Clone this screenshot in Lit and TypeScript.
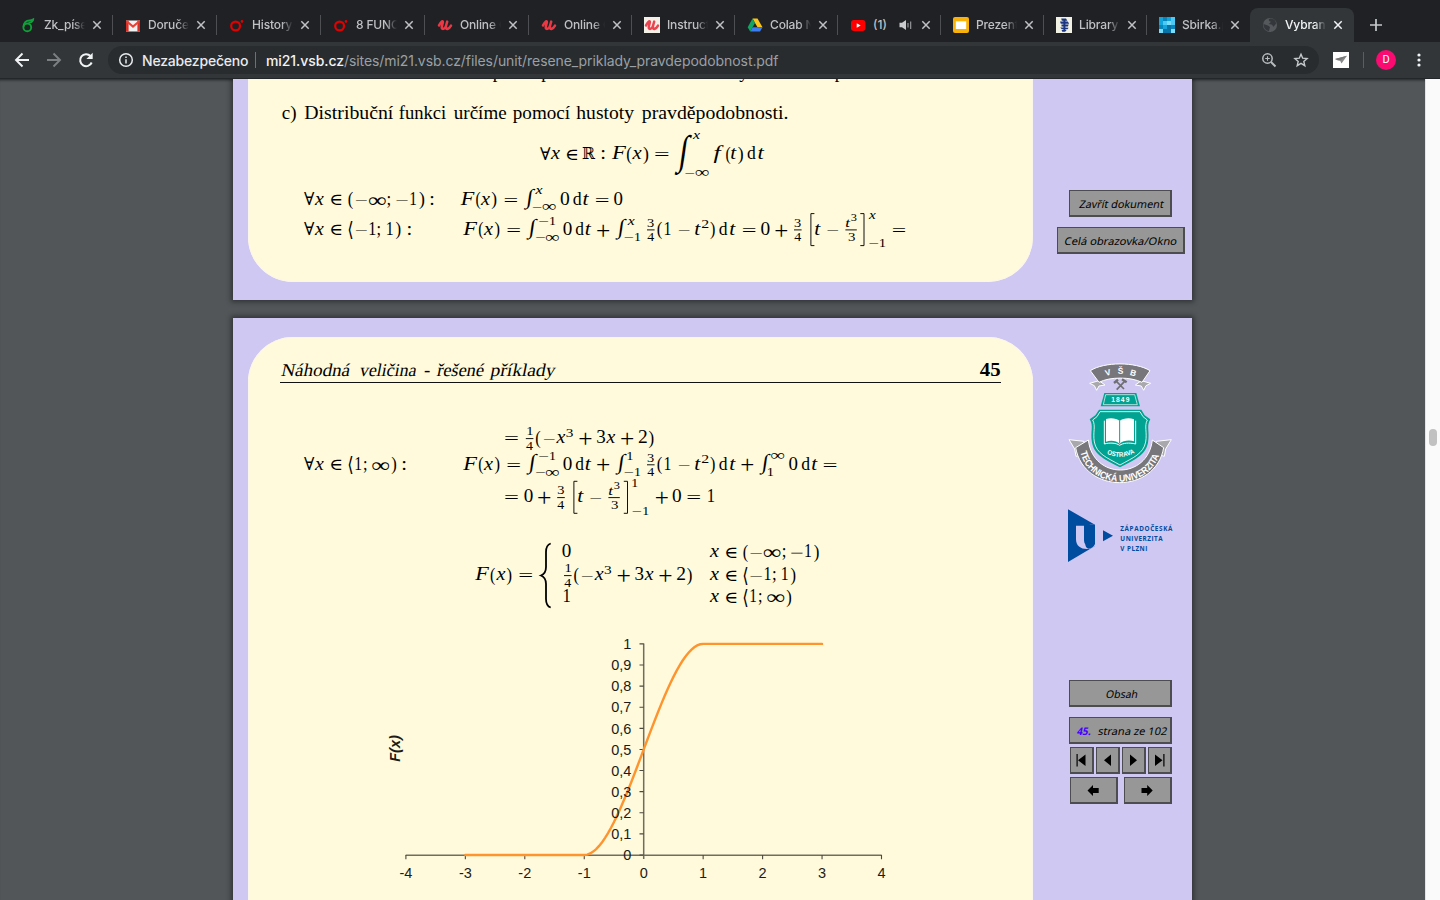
import { LitElement, html, svg, css } from "lit";
import { customElement, property } from "lit/decorators.js";

const SERIF = '"Liberation Serif", "DejaVu Serif", "DejaVu Sans", serif';
const SANS = '"Noto Sans", "Open Sans", sans-serif';

/* ---------- glyph fitting ---------- */

const ctx = document.createElement("canvas").getContext("2d")!;
interface Ink { l: number; r: number; t: number; b: number; }
function ink(text: string, font: string): Ink {
  ctx.font = font;
  const m = ctx.measureText(text);
  return { l: -m.actualBoundingBoxLeft / 100, r: m.actualBoundingBoxRight / 100, t: m.actualBoundingBoxAscent / 100, b: m.actualBoundingBoxDescent / 100 };
}
interface Opt { italic?: boolean; bold?: boolean; skew?: boolean; family?: string; cls?: string; }

// Sets text on a baseline so that its ink spans x1..x2.
function run(text: string, x1: number, x2: number, bl: number, size = 18, o: Opt = {}) {
  const k = ink(text, `${o.italic ? "italic " : ""}${o.bold ? "bold " : ""}100px ${o.family ?? SERIF}`);
  const sl = o.skew ? 0.2 : 0;
  const lean = sl * size * 0.68;
  const sx = (x2 - x1 - lean) / ((k.r - k.l) * size);
  const cls = `${o.family ? "sans" : "serif"} ${o.italic ? "it" : ""} ${o.bold ? "bd" : ""} ${o.cls ?? ""}`;
  return svg`<text class=${cls} font-size=${size} transform="matrix(${sx} 0 ${-sl} 1 ${x1 - k.l * size * sx} ${bl})">${text}</text>`;
}
// Stretches a symbol to a box; integrals lean to the right.
function box(text: string, x1: number, x2: number, y1: number, y2: number) {
  const k = ink(text, `100px ${SERIF}`);
  const sl = text === "∫" ? 0.14 : 0;
  const h = y2 - y1;
  const sx = (x2 - x1 - sl * h * 0.75) / ((k.r - k.l) * 18);
  const sy = h / ((k.t + k.b) * 18);
  const below = k.b * 18 * sy;
  return svg`<text class="serif" font-size="18" transform="matrix(${sx} 0 ${-sl * sy} ${sy} ${x1 - k.l * 18 * sx + sl * below * 0.6} ${y1 + k.t * 18 * sy})">${text}</text>`;
}

const SPAN: Record<string, [number, number]> = {
  "(": [-13.6, 4.6], ")": [-13.6, 4.6], "⟨": [-13.6, 4.6], "∀": [-12.7, 0.2], "∈": [-10, 0.6],
  "∞": [-7.9, 0.2], "−": [-5, -4.1], "=": [-6.9, -2.5], "+": [-10.4, 1.4], "ℝ": [-12.3, 0], "∫": [-15.7, 5.4],
};
type Tok = [string, number, number];
const math = (bl: number, toks: Tok[]) => toks.map(([c, a, b]) =>
  SPAN[c] ? box(c, a, b, bl + SPAN[c][0], bl + SPAN[c][1]) : run(c, a, b, bl, 18, { italic: /[xtFf]/.test(c) }));
const small = (c: string, a: number, b: number, bl: number) =>
  c === "−" ? box(c, a, b, bl - 4.4, bl - 3.5)
  : c === "∞" ? box(c, a, b, bl - 6.3, bl - 0.4)
  : run(c, a, b, bl, 13, { italic: /[xt]/.test(c) });
const frac = (x: number, bl: number, n: string, d: string) => svg`
  ${run(n, n === "1" ? x + 1.6 : x + 0.6, x + 6.8, bl - 7.9, 12.6)}${run(d, x + 0.3, x + 7, bl + 6.2, 12.6)}
  <path class="rule" d="M${x} ${bl - 4.7}h7.6"/>`;
const bracket = (bl: number, l: number, r: number) => svg`
  ${math(bl, [["t", l + 5, l + 10.6], ["−", l + 17, l + 28]])}
  ${run("t", l + 36, l + 40.4, bl - 7.7, 12.8, { italic: true })}${run("3", l + 41.3, l + 46.6, bl - 13.6, 9.8)}
  <path class="rule" d="M${l + 35.4} ${bl - 4.7}h11.4"/>${run("3", l + 38.6, l + 45, bl + 6.2, 12.6)}
  <path class="rule" d="M${l + 4.4} ${bl - 21}h-3.5v32h3.5M${r - 4.2} ${bl - 21}h3.7v32h-3.7"/>`;

const strip = (y: number, h: number, body: unknown) =>
  html`<svg class="strip" width="785" height=${h} viewBox="248 ${y} 785 ${h}">${body}</svg>`;
const label = (text: string, w: number, a: number, b: number, bl: number) =>
  html`<svg width=${w} height="23" viewBox="0 0 ${w} 23">${run(text, a, b, bl, 10.6, { family: SANS, skew: true })}</svg>`;

const lead = (bl: number) => math(bl, [["∀", 304, 314.3], ["x", 314.6, 323.7], ["∈", 330.8, 341]]);
const lowInf = (bl: number) => svg`${math(bl, [["F", 463, 477.2], ["(", 478.8, 483], ["x", 483.7, 493], [")", 495, 499.3], ["=", 507.4, 520], ["∫", 526.5, 537.7], ["0", 563.2, 571.6], ["d", 575.8, 583.8], ["t", 585.5, 591.1], ["+", 597, 609.2], ["∫", 615.5, 626.6]])}
  ${small("−", 538.8, 548, bl - 9.8)}${small("1", 550, 555, bl - 9.8)}${small("−", 535.8, 544.8, bl + 6.8)}${small("∞", 545.8, 559, bl + 6.8)}
  ${small("−", 624.3, 633, bl + 6.8)}${small("1", 635, 640, bl + 6.8)}`;
const square = (bl: number) => svg`${frac(647, bl, "3", "4")}${math(bl, [["(", 657.3, 661.8], ["1", 664.8, 670.5], ["−", 678.3, 689.2], ["t", 695, 700.6], [")", 710.4, 714.6], ["d", 719.4, 727.5], ["t", 730, 735.6]])}${small("2", 701.8, 708.3, bl - 6.8)}`;
const cubic = (bl: number, x: number) => svg`${frac(x, bl, "1", "4")}${math(bl, [["(", x + 10.2, x + 14.6], ["−", x + 17.5, x + 28.5], ["x", x + 30.3, x + 39.5], ["+", x + 53.4, x + 65.6], ["3", x + 71.3, x + 79.5], ["x", x + 80.4, x + 89.5], ["+", x + 95.3, x + 107.5], ["2", x + 113, x + 121], [")", x + 123.2, x + 127.6]])}${small("3", x + 40.6, x + 47.2, bl - 6.4)}`;

/* ---------- browser chrome ---------- */

const udemy = (c: string) => svg`<path d="M2 8.500C3.500 6 4.300 4.200 5.300 4.200c1.800 0-1.100 5-.5 6.800.7 2 3.200.6 4.200-2.200L10.200 4.600M9 8.800c-.4 2.600.5 3.500 1.800 3 1.400-.5 2.400-1.800 3.200-3.200" fill="none" stroke=${c} stroke-width="2.500" stroke-linecap="round"/>`;
const ring = svg`<circle cx="6.600" cy="9" r="4.400" fill="none" stroke="#e30000" stroke-width="2.200"/><circle cx="13" cy="4.400" r="1.300" fill="#e30000"/>`;
const icons: Record<string, unknown> = {
  six: svg`<circle cx="6.300" cy="10.400" r="3.900" fill="none" stroke="#0fa13a" stroke-width="1.900"/><path d="M2.500 10C2.400 6 5 3.400 8.500 3.400c1.800 0 2.800-.6 3.800-1.200C12.300 5 9.500 5.800 7.500 5.400" fill="none" stroke="#0fa13a" stroke-width="1.700"/>`,
  gmail: svg`<path d="M1 3.500h14v11H1z" fill="#f2f2f2"/><path d="M1 3.500h2.600v11H1zM12.400 3.500H15v11h-2.600z" fill="#d93025"/><path d="M1.700 4.300 8 9.600l6.300-5.300" fill="none" stroke="#ea4335" stroke-width="2.100"/>`,
  ring,
  udemy: udemy("#ec3845"),
  udemyBox: svg`<path d="M0 0h16v16H0z" fill="#f3f1e7"/>${udemy("#ec4350")}`,
  drive: svg`<path d="M5.500 1.500h5l5 8.700h-5z" fill="#fbc51c"/><path d="M5.500 1.500.7 10.200l2.500 4.200L8 6z" fill="#11a561"/><path d="M5.600 10.200h9.900L13 14.500H3.200z" fill="#3d7df2"/>`,
  youtube: svg`<rect x="1" y="3" width="14.500" height="11" rx="3" fill="#f00"/><path d="m6.700 6.200 4 2.300-4 2.300z" fill="#fff"/>`,
  slides: svg`<rect x="0" y="0" width="16" height="16" rx="2" fill="#f9b20a"/><path d="M2.800 4.300h10.400v7.700H2.800z" fill="#fff"/>`,
  library: svg`<path d="M0 0h16v16H0z" fill="#f1f1e4"/><path d="M5.200 1.600h4.800l1.400 2.100H5.800zM4 4.500h7.800l1.400 2.200H4.800zM5.500 7.600h7.200l-.8 2H5.500zM4.200 10.500l8.400.2-1 1.500H5.800zM5.600 13l5 .1-1.500 1.700H6.300z" fill="#1c3580"/><path d="M8.400 2v12" stroke="#1c3580" stroke-width="2"/>`,
  squares: svg`<path d="M0 0h16v16H0z" fill="#14a4dc"/><path d="M4 0h4v4H4zM0 8h4v4H0zM12 8h4v4h-4z" fill="#0886bb"/><path d="M12 0h4v8h-4zM4 4h4v4H4z" fill="#4cc9f5"/><path d="M8 4h4v4H8zM0 12h4v4H0zM12 12h4v4h-4z" fill="#7adcf8"/><path d="M4 12h8v4H4zM8 8h4v4H8z" fill="#0873a6"/>`,
  globe: svg`<circle cx="8" cy="8" r="7" fill="#56595c"/><path d="M8.500 1.500C6 2 6.500 4 8 4.300 9.500 5 8 6.600 6.500 7l3 .5c1.500.5 1 2 2 2.200l2.500-3c0-3-2-5-5.500-5.200zM1.500 7l4.500 1.500 2 1.500-1 4C4 14 1.500 11 1.500 7z" fill="#34373b"/>`,
};

@customElement("browser-tab")
class BrowserTab extends LitElement {
  @property() icon = "";
  @property() name = "";
  @property({ type: Boolean }) audio = false;
  @property({ type: Boolean, reflect: true }) active = false;
  static styles = css`
    :host { display: flex; align-items: center; box-sizing: border-box; height: 34px; padding-left: 12px; color: #bfc1c5; font: 500 12px Inter, sans-serif; flex: 0 0 103px; position: relative; }
    :host(.wide) { flex-basis: 104px; }
    .fav { width: 16px; height: 16px; flex: none; }
    .title { width: 41px; margin-left: 7px; overflow: hidden; white-space: nowrap; letter-spacing: -0.15px; line-height: 16px; -webkit-mask: linear-gradient(90deg, #000 72%, transparent); }
    .title.short { width: 17px; -webkit-mask: none; overflow: visible; letter-spacing: 0; }
    .sound { width: 16px; height: 16px; margin: 0 0 0 8px; }
    .close { width: 10px; height: 10px; margin-left: 7px; }
    :host::after { content: ""; width: 1px; height: 20px; background: #4d4f53; margin-left: auto; }
    :host([active]) { background: #323639; border-radius: 8px 8px 0 0; color: #f1f3f4; flex-basis: 104px; }
    :host([active])::after, :host(.last)::after { background: none; }
  `;
  render() {
    return html`<svg class="fav" viewBox="0 0 16 16">${icons[this.icon]}</svg>
      <span class="title ${this.audio ? "short" : ""}">${this.name}</span>
      ${this.audio ? html`<svg class="sound" viewBox="0 0 16 16"><path d="M1.500 5.700H4L8 3v10l-4-2.700H1.500z" fill="#c9cbce"/><path d="M10 6v4.500M12.700 4.500v7.500" stroke="#9fa1a4" stroke-width="1.100"/></svg>` : ""}
      <svg class="close" viewBox="0 0 10 10"><path d="m1.300 1.300 7.400 7.400m0-7.400L1.300 8.700" stroke="currentColor" stroke-width="1.500"/></svg>`;
  }
}

const TABS: [string, string][] = [
  ["six", "Zk_písemka"], ["gmail", "Doručená"], ["ring", "History of"], ["ring", "8 FUNCTIO"], ["udemy", "Online C"], ["udemy", "Online C"],
  ["udemyBox", "Instructor"], ["drive", "Colab No"], ["youtube", "(1)"], ["slides", "Prezenta"], ["library", "Library G"], ["squares", "Sbirka.pdf"],
];

@customElement("chrome-bars")
class ChromeBars extends LitElement {
  static styles = css`
    :host { display: block; font-family: Inter, sans-serif; }
    .tabs { display: flex; height: 42px; box-sizing: border-box; padding: 8px 0 0 9px; background: #202124; }
    .plus { width: 14px; height: 14px; margin: 10px 0 0 15px; }
    .bar { display: flex; align-items: center; height: 37px; box-sizing: border-box; background: #323639; border-bottom: 1px solid #24272a; padding-left: 13px; }
    .nav { width: 18px; height: 18px; margin-right: 14px; }
    .omni { display: flex; align-items: center; width: 1211px; height: 28px; margin-left: -1px; box-sizing: border-box; border-radius: 14px; background: #282c2f; padding: 0 10px; font-size: 14px; color: #9aa0a6; }
    .info { width: 16px; height: 16px; }
    .insecure { color: #e8eaed; font-weight: 500; margin-left: 8px; width: 107px; white-space: nowrap; letter-spacing: -0.2px; }
    .sep { width: 1px; height: 16px; background: #6d7175; margin: 0 10px 0 6px; }
    .url { white-space: nowrap; flex: 1; letter-spacing: -0.075px; }
    .host { color: #f1f3f4; font-weight: 500; }
    .zoom { width: 16px; height: 16px; margin-right: 16px; }
    .ext { width: 16px; height: 16px; margin-left: 14px; }
    .vsep { width: 1px; height: 16px; background: #5a5e61; margin-left: 14px; }
    .avatar { width: 20px; height: 20px; border-radius: 50%; background: #fb0a72; color: #fff; font: 11px/20px Roboto, sans-serif; text-align: center; margin-left: 12px; }
    .menu { width: 4px; height: 16px; margin-left: 21px; }
  `;
  render() {
    return html`<div class="tabs">
        ${TABS.map(([i, n], k) => html`<browser-tab class="${k < 5 ? "wide" : ""} ${k === 11 ? "last" : ""}" .icon=${i} .name=${n} ?audio=${i === "youtube"}></browser-tab>`)}
        <browser-tab active icon="globe" name="Vybrané"></browser-tab>
        <svg class="plus" viewBox="0 0 14 14"><path d="M7 1v12M1 7h12" stroke="#c6c8ca" stroke-width="1.700"/></svg>
      </div>
      <div class="bar">
        <svg class="nav" viewBox="0 0 18 18"><path d="M16 9H3m6.500-6.500L3 9l6.500 6.500" fill="none" stroke="#f1f3f4" stroke-width="1.900"/></svg>
        <svg class="nav" viewBox="0 0 18 18"><path d="M2 9h13M8.500 2.500 15 9l-6.500 6.500" fill="none" stroke="#7d8083" stroke-width="1.900"/></svg>
        <svg class="nav" viewBox="0 0 18 18"><path d="M14.700 11.500A6 6 0 1 1 13.500 5" fill="none" stroke="#f1f3f4" stroke-width="2"/><path d="M15.700 1.700v6.300H9.400z" fill="#f1f3f4"/></svg>
        <div class="omni">
          <svg class="info" viewBox="0 0 16 16"><circle cx="8" cy="8" r="6.300" fill="none" stroke="#e8eaed" stroke-width="1.500"/><path d="M8 7.200v4.300M8 4.400V6" stroke="#e8eaed" stroke-width="1.500"/></svg>
          <span class="insecure">Nezabezpečeno</span><span class="sep"></span>
          <span class="url"><span class="host">mi21.vsb.cz</span>/sites/mi21.vsb.cz/files/unit/resene_priklady_pravdepodobnost.pdf</span>
          <svg class="zoom" viewBox="0 0 16 16"><circle cx="6.500" cy="6.500" r="4.700" fill="none" stroke="#b9bcbf" stroke-width="1.500"/><path d="m10 10 4.500 4.500" stroke="#b9bcbf" stroke-width="1.900"/><path d="M6.500 4.200v4.600M4.200 6.500h4.600" stroke="#b9bcbf" stroke-width="1.100"/></svg>
          <svg class="info" viewBox="0 0 16 16"><path d="m8 2.200 1.700 4 4.400.4-3.300 2.900 1 4.200L8 11.400l-3.800 2.300 1-4.200-3.300-2.900 4.400-.4z" fill="none" stroke="#c6c9cc" stroke-width="1.400"/></svg>
        </div>
        <svg class="ext" viewBox="0 0 16 16"><path d="M0 0h16v16H0z" fill="#fff"/><path d="M2 7 14 3.700 8.500 11.500l-1.500-3z" fill="#8a8a8a"/><path d="M7 8.500l7-4.800L2 7l3 1.500z" fill="#777"/></svg>
        <span class="vsep"></span><span class="avatar">D</span>
        <svg class="menu" viewBox="0 0 4 16"><circle cx="2" cy="3" r="1.600" fill="#f1f3f4"/><circle cx="2" cy="8" r="1.600" fill="#f1f3f4"/><circle cx="2" cy="13" r="1.600" fill="#f1f3f4"/></svg>
      </div>`;
  }
}

/* ---------- document ---------- */

const X = (v: number) => 643.7 + v * 59.45;
const Y = (v: number) => 855 - v * 211.1;
const curve = Array.from({ length: 41 }, (_, i) => {
  const x = -1 + i / 20;
  return `L${X(x).toFixed(2)} ${Y((-(x ** 3) + 3 * x + 2) / 4).toFixed(2)}`;
}).join("");

const chart = () => svg`
  <path class="axis" d="M405.700 855.300H881.700M643.700 643.500V859"/>
  <path class="tick" d="${[-4, -3, -2, -1, 1, 2, 3, 4].map((v) => `M${X(v)} 855v4.200`).join("")}${Array.from({ length: 11 }, (_, i) => `M639.500 ${Y(i / 10)}h4.200`).join("")}"/>
  <path class="curve" d="M${X(-3)} ${Y(0)}${curve}L${X(3)} ${Y(1)}"/>
  ${Array.from({ length: 11 }, (_, i) => svg`<text class="num" x="631.300" y=${Y(i / 10) + 5.2} text-anchor="end">${i === 0 ? "0" : i === 10 ? "1" : `0,${i}`}</text>`)}
  ${[-4, -3, -2, -1, 0, 1, 2, 3, 4].map((v) => svg`<text class="num" x=${X(v)} y="878" text-anchor="middle">${v}</text>`)}
  <text class="num ylab" transform="translate(400 748.500) rotate(-90)" text-anchor="middle">F(x)</text>`;

const emblem = () => svg`
  <g stroke="#fff" stroke-width="3" stroke-linejoin="round">
    <path d="M122 85l28-8 18 13-18 3-7 13-7-14zM305 85l-28-8-18 13 18 3 7 13 7-14z" fill="#a9a9ad"/>
    <path d="M124 47C165 20 260 20 303 47L279 82C245 65 182 65 150 82z" fill="#77777b"/>
    <path d="M60 254l45 5-2 38-22 7-4-22zM367 254l-45 5 2 38 22 7 4-22z" fill="#a9a9ad"/>
    <path d="M80 278L118 255C132 375 296 375 310 255L344 278C320 418 105 418 80 278z" fill="#77777b"/>
  </g>
  <g stroke="#6f6f73" stroke-width="5"><path d="M200 77l25 25M229 77l-26 27"/><path d="M195 84l12-10M219 73l14 9" stroke-width="7"/></g>
  <path d="M166 114h96l11 40H155z" fill="#00a391"/><path d="M170 119h87l8 30H163z" fill="none" stroke="#fff" stroke-width="2"/>
  <path d="M150 164h127l10 17 17 12c-13 20-1 37-7 70-8 39-42 51-84 74-42-23-76-35-84-74-6-33 6-50-7-70l17-12z" fill="#00a391"/>
  <path d="M153 170h120l9 15 13 10c-10 18 0 36-5 66-7 36-38 47-77 69-39-22-70-33-77-69-5-30 5-48-5-66l13-10z" fill="none" stroke="#fff" stroke-width="2.500"/>
  <path d="M171 192c15-5 32-2 41 6 9-8 29-11 43-5v66c-14-5-34-2-43 7-9-9-27-12-41-6z" fill="#fff"/>
  <path d="M212 198v66" stroke="#00a391" stroke-width="3"/><path d="M166 197v70c18-5 36-3 46 4 10-7 28-9 48-4v-70" fill="none" stroke="#fff" stroke-width="3"/>
  <path id="top" d="M158 69Q213 43 270 69" fill="none"/><path id="low" d="M92 283C114 412 312 412 335 283" fill="none"/><path id="mid" d="M168 293Q213 319 262 291" fill="none"/>
  <text class="seal" font-size="25"><textPath href="#top" textLength="90" startOffset="14">V Š B</textPath></text>
  <text class="seal" font-size="29" textLength="312" lengthAdjust="spacingAndGlyphs"><textPath href="#low" startOffset="8" textLength="312" lengthAdjust="spacingAndGlyphs">TECHNICKÁ UNIVERZITA</textPath></text>
  <text class="seal" font-size="20" textLength="88" lengthAdjust="spacingAndGlyphs"><textPath href="#mid" startOffset="6" textLength="88" lengthAdjust="spacingAndGlyphs">OSTRAVA</textPath></text>
  <text class="seal" font-size="20" x="187" y="141" textLength="54">1849</text>
  <path d="M57 463L138 509V573L57 621zM162 526l30 16-30 17z" fill="#004c9f"/>
  <path d="M81 512h24v44c0 14 10 18 17 10V509h16v64q-8 9-19 9c-22 2-38-8-38-29z" fill="#cfc8f3"/>
  <path d="M109 509h29v58q-6 14-20 14-9-3-9-15z" fill="#004c9f"/>
  <text class="zcu" x="214" y="527" textLength="156">ZÁPADOČESKÁ</text><text class="zcu" x="214" y="558" textLength="127">UNIVERZITA</text><text class="zcu" x="214" y="589" textLength="81">V PLZNI</text>`;

@customElement("pdf-view")
class PdfView extends LitElement {
  static styles = css`
    :host { display: flex; height: 821px; overflow: hidden; background: #525659; box-shadow: inset 0 3px 3px -2px #0009; }
    .pages { display: flex; flex-direction: column; gap: 18px; width: 1425px; padding-left: 233px; box-sizing: border-box; }
    .page { display: flex; width: 959px; flex: none; box-sizing: border-box; background: #cfc8f3; box-shadow: 0 0 5px 2px #0006; padding-left: 15px; }
    .first { height: 221px; }
    .second { height: 700px; padding-top: 19px; }
    .slide { width: 785px; background: #fffadb; overflow: hidden; box-shadow: inset 0 0 0 1px #fbf6ea; flex: none; }
    .first .slide { height: 203px; border-radius: 0 0 45px 45px; }
    .second .slide { height: 690px; border-radius: 45px 45px 0 0; }
    .strip { display: block; }
    .serif { font-family: "Liberation Serif", "DejaVu Serif", "DejaVu Sans", serif; }
    .sans { font-family: "Noto Sans", "Open Sans", sans-serif; }
    .it { font-style: italic; }
    .bd { font-weight: bold; }
    .blue { fill: #4400ff; }
    .rule { stroke: #111; stroke-width: 1; fill: none; }
    .head { stroke: #111; stroke-width: 1.200; }
    .brace { fill: none; stroke: #000; stroke-width: 1.800; }
    .axis { stroke: #706c5f; stroke-width: 1.500; }
    .tick { stroke: #4c493f; stroke-width: 1.100; }
    .curve { stroke: #ff932e; stroke-width: 2.400; fill: none; stroke-linecap: round; }
    .num { font: 14.500px "Liberation Sans", sans-serif; fill: #1d1a18; }
    .ylab { font-weight: bold; font-style: italic; }
    .side { display: flex; flex-direction: column; align-items: center; width: 159px; padding-left: 16px; box-sizing: border-box; }
    .side svg { display: block; }
    .first .side { padding-top: 111px; gap: 10px; }
    .btn { display: flex; align-items: center; justify-content: center; box-sizing: border-box; height: 27px; background: #979797; border: solid #4d4d50; border-width: 1px 2px 2px 1px; flex: none; }
    .w103 { width: 103px; }
    .w128 { width: 128px; }
    .logo { margin: 18px 0 105px 2px; flex: none; }
    .obsah { margin-bottom: 10px; }
    .row { display: flex; justify-content: space-between; width: 102px; margin-top: 3px; }
    .w24 { width: 24px; }
    .w48 { width: 48px; }
    .seal { font-family: "Liberation Sans", sans-serif; font-weight: bold; fill: #fff; }
    .zcu { font: bold 19px "Open Sans", sans-serif; fill: #004c9f; }
    .scroll { width: 15px; background: #fafafa; border-left: 1px solid #e4e4e4; box-sizing: border-box; padding: 350px 0 0 3px; }
    .thumb { width: 8px; height: 17px; border-radius: 4px; background: #c1c1c1; }
  `;
  render() {
    const sk = { skew: true };
    return html`<div class="pages">
      <section class="page first">
        <div class="slide">
          ${strip(79, 18, svg`${run("p", 493, 501.5, 78, 18)}${run("p", 541.5, 550, 78, 18)}${run("y", 739.5, 748.5, 78, 18)}${run("p", 835, 843.5, 78, 18)}`)}
          ${strip(97, 33, svg`${run("c)", 282.3, 295.7, 118.6)}${run("Distribuční", 304.7, 393.3, 118.6)}${run("funkci", 399.3, 446, 118.6)}${run("určíme", 454, 506, 118.6)}${run("pomocí", 513, 570, 118.6)}${run("hustoty", 576.3, 634, 118.6)}${run("pravděpodobnosti.", 642, 787.3, 118.6)}`)}
          ${strip(130, 52, svg`${math(159.3, [["∀", 540, 550.5], ["x", 550.7, 560], ["∈", 566.7, 577], ["ℝ", 582.5, 595], [":", 601.8, 604.5], ["F", 611.7, 626], ["(", 627, 631.5], ["x", 632, 641.5], [")", 643.6, 648.2], ["=", 655, 668.3], ["f", 713.8, 723.8], ["(", 726, 730.2], ["t", 731, 736.5], [")", 738.2, 742.8], ["d", 747.6, 755.7], ["t", 758.5, 764.4]])}
            ${box("∫", 675, 691.5, 135, 175.5)}${small("x", 692.7, 700, 139)}${small("−", 685, 694, 176.5)}${small("∞", 695.5, 708.8, 176.5)}`)}
          ${strip(182, 30, svg`${lead(204.5)}${math(204.5, [["(", 348.5, 353], ["−", 355.5, 366.7], ["∞", 368.5, 385.5], [";", 387.3, 390], ["−", 396, 407.5], ["1", 410.5, 416], [")", 419.6, 424.2], [":", 430.7, 433.3],
            ["F", 460.5, 474.5], ["(", 476, 480.2], ["x", 480.7, 490], [")", 491.7, 496.2], ["=", 504.5, 517], ["∫", 524, 535.2], ["0", 560.7, 569.3], ["d", 573.3, 581.5], ["t", 583.3, 588.9], ["=", 595.7, 608.3], ["0", 614, 622.3]])}
            ${small("x", 535.2, 542.5, 193.6)}${small("−", 532.6, 541.4, 210.5)}${small("∞", 542.7, 556, 210.5)}`)}
          ${strip(212, 71, svg`${lead(234.6)}${lowInf(234.6)}${square(234.6)}${math(234.6, [["⟨", 348.5, 352.3], ["−", 355.5, 366.7], ["1", 369.5, 375.3], [";", 377.4, 380], ["1", 387, 392.7], [")", 396, 400.4], [":", 408, 410.7],
            ["=", 742.7, 755.3], ["0", 761, 769.5], ["+", 775.3, 787.3], ["=", 892.7, 905]])}
            ${small("x", 627.5, 634.7, 224.7)}${frac(794, 234.6, "3", "4")}${bracket(234.6, 810, 864.5)}${small("x", 868.7, 875.7, 219.3)}${small("−", 869, 878, 247)}${small("1", 880, 885.3, 247)}`)}
        </div>
        <aside class="side">
          <div class="btn w103">${label("Zavřít dokument", 99, 8, 93.5, 15.6)}</div>
          <div class="btn w128">${label("Celá obrazovka/Okno", 124, 6.5, 119.5, 16)}</div>
        </aside>
      </section>
      <section class="page second">
        <div class="slide">
          ${strip(337, 63, svg`${run("Náhodná", 281, 351.7, 376.3, 18, sk)}${run("veličina", 359, 418, 376.3, 18, sk)}${run("-", 424.6, 429.7, 376.3, 18)}${run("řešené", 436.3, 485, 376.3, 18, sk)}${run("příklady", 490, 557, 376.3, 18, sk)}${run("45", 980, 1000, 376.3, 18, { bold: true })}
            <path class="head" d="M280 382.500H1001"/>`)}
          ${strip(400, 50, svg`${math(443.3, [["=", 505, 517.7]])}${cubic(443.3, 525.8)}`)}
          ${strip(450, 28, svg`${lead(469.5)}${lowInf(469.5)}${square(469.5)}${math(469.5, [["⟨", 348.5, 352.3], ["1", 355.4, 361], [";", 363.7, 366.3], ["∞", 371.7, 388.8], [")", 391.7, 396], [":", 402.8, 405.5], ["+", 741.3, 753.3], ["∫", 759.3, 770.3], ["0", 789, 797.3], ["d", 801.7, 809.8], ["t", 812, 817.5], ["=", 823.5, 836.3]])}
            ${small("1", 627.5, 632.7, 459.7)}${small("∞", 771, 784.3, 459)}${small("1", 767.8, 773, 475.5)}`)}
          ${strip(478, 42, svg`${math(502.3, [["=", 505, 517.7], ["0", 524.3, 532.7], ["+", 538, 550.3], ["+", 655.7, 667.7], ["0", 672.7, 681.2], ["=", 687.3, 700], ["1", 708, 714]])}${frac(557.2, 502.3, "3", "4")}${bracket(502.3, 573, 628)}${small("1", 632.3, 637.3, 487)}${small("−", 632.3, 641, 515)}${small("1", 643.3, 648.3, 515)}`)}
          ${strip(520, 100, svg`${math(580.3, [["F", 475, 489], ["(", 490.7, 495], ["x", 496, 505.3], [")", 507, 511.3], ["=", 519.3, 532], ["x", 709.7, 719], ["∈", 726, 736.3], ["⟨", 743.5, 747.3], ["−", 750, 761.7], ["1", 764.7, 770.5], [";", 772.8, 775.5], ["1", 782, 787.7], [")", 791, 795.3]])}
            <path class="brace" d="M550.700 543.500Q546 545 546 552V567Q546 573.500 541 575.500Q546 577.500 546 584V599Q546 606 550.700 607.500"/>
            ${cubic(580.3, 564)}
            ${math(557.3, [["0", 562.3, 570.7], ["x", 709.7, 719], ["∈", 726, 736.3], ["(", 743.3, 747.7], ["−", 750, 761.7], ["∞", 763.3, 780.3], [";", 782.5, 785.2], ["−", 790.7, 802.3], ["1", 805.3, 811], [")", 814.3, 818.7]])}
            ${math(602.4, [["1", 563.8, 569.8], ["x", 709.7, 719], ["∈", 726, 736.3], ["⟨", 743.5, 747.3], ["1", 750.5, 756], [";", 758.7, 761.3], ["∞", 766.7, 784], [")", 786.7, 791]])}`)}
          ${strip(620, 290, chart())}
        </div>
        <aside class="side">
          <svg class="logo" width="145" height="220" viewBox="0 0 435 660">${emblem()}</svg>
          <div class="btn w103 obsah">${label("Obsah", 99, 35, 67, 15.7)}</div>
          <div class="btn w103"><svg width="99" height="23" viewBox="0 0 99 23">${run("45.", 5.5, 20.5, 15.5, 10.6, { family: SANS, skew: true, bold: true, cls: "blue" })}${run("strana ze 102", 27, 96.5, 15.5, 10.6, { family: SANS, skew: true })}</svg></div>
          <div class="row">
            <div class="btn w24"><svg width="20" height="20" viewBox="0 0 20 20"><path d="M5.500 4h1.200v12.500H5.500zM14.500 4.500v11.500L7 10.200z"/></svg></div>
            <div class="btn w24"><svg width="20" height="20" viewBox="0 0 20 20"><path d="M14 4.500v11.500L7 10.200z"/></svg></div>
            <div class="btn w24"><svg width="20" height="20" viewBox="0 0 20 20"><path d="M7 4.500v11.500L14 10.200z"/></svg></div>
            <div class="btn w24"><svg width="20" height="20" viewBox="0 0 20 20"><path d="M14.300 4h1.200v12.500h-1.200zM6 4.500v11.500l7.500-5.800z"/></svg></div>
          </div>
          <div class="row">
            <div class="btn w48"><svg width="20" height="20" viewBox="0 0 20 20"><path d="M4.500 10.500 10 5v3h5.700v5H10v3z"/></svg></div>
            <div class="btn w48"><svg width="20" height="20" viewBox="0 0 20 20"><path d="M15.700 10.500 10.200 5v3H4.500v5h5.700v3z"/></svg></div>
          </div>
        </aside>
      </section>
    </div>
    <div class="scroll"><div class="thumb"></div></div>`;
  }
}

@customElement("app-root")
class AppRoot extends LitElement {
  static styles = css`:host { display: block; width: 1440px; height: 900px; overflow: hidden; }`;
  render() {
    return html`<chrome-bars></chrome-bars><pdf-view></pdf-view>`;
  }
}
